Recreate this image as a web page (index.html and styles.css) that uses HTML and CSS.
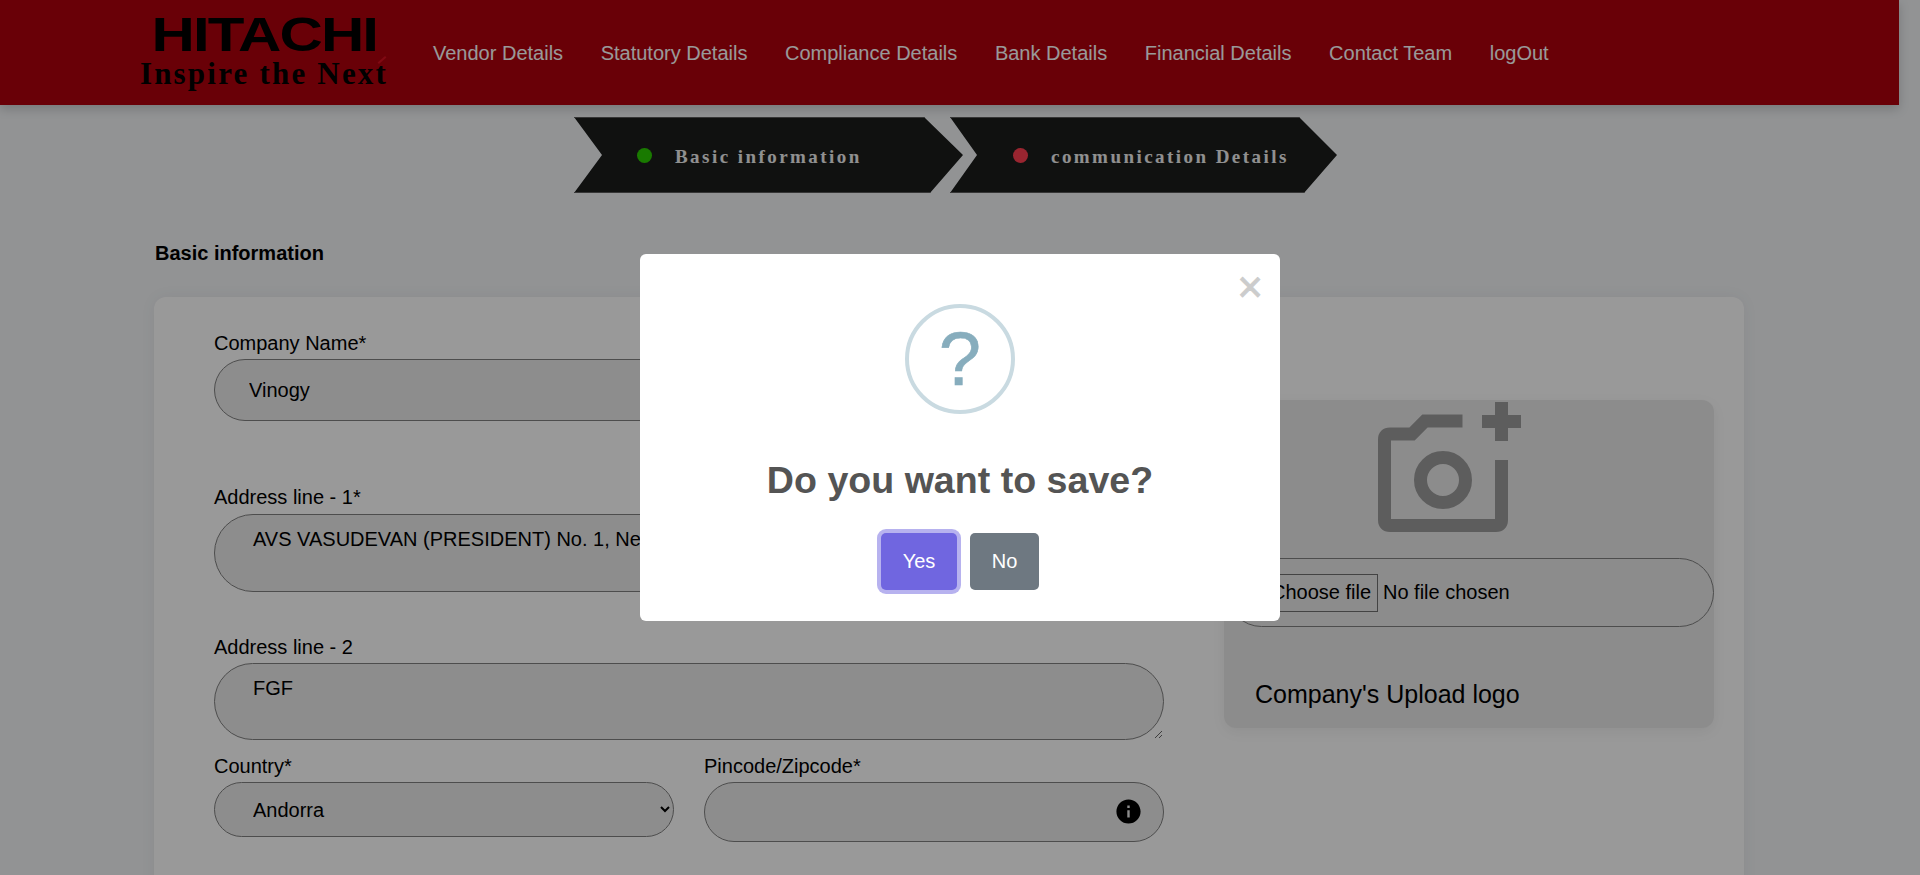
FILE: index.html
```html
<!DOCTYPE html>
<html lang="en">
<head>
<meta charset="utf-8">
<title>Vendor Details</title>
<link rel="stylesheet" href="styles.css">
</head>
<body>
<div class="page">
  <header class="topbar">
    <div class="logo">
      <span class="logo-name">HITACHI</span>
      <span class="logo-tag">Inspire the Next</span>
      <span class="logo-accent"></span>
    </div>
    <nav class="nav">
      <a href="#">Vendor Details</a>
      <a href="#">Statutory Details</a>
      <a href="#">Compliance Details</a>
      <a href="#">Bank Details</a>
      <a href="#">Financial Details</a>
      <a href="#">Contact Team</a>
      <a href="#">logOut</a>
    </nav>
  </header>

  <div class="steps">
    <div class="step step-one"><span class="dot dot-green"></span><span class="step-text">Basic information</span></div>
    <div class="step step-two"><span class="dot dot-red"></span><span class="step-text">communication Details</span></div>
  </div>

  <h2 class="section-title">Basic information</h2>

  <section class="card">
    <form class="fields">
      <div class="field field-company">
        <label class="label">Company Name*</label>
        <input class="control input-company" type="text" value="Vinogy">
      </div>
      <div class="field field-addr1">
        <label class="label label-addr1">Address line - 1*</label>
        <textarea class="control area area-one">AVS VASUDEVAN (PRESIDENT) No. 1, New Street</textarea>
      </div>
      <div class="field field-addr2">
        <label class="label">Address line - 2</label>
        <textarea class="control area area-two">FGF</textarea>
      </div>
      <div class="field-row">
        <div class="field">
          <label class="label">Country*</label>
          <select class="control select-country"><option>Andorra</option></select>
        </div>
        <div class="field">
          <label class="label">Pincode/Zipcode*</label>
          <div class="pin-wrap">
            <input class="control input-pin" type="text">
            <svg class="info-icon" viewBox="0 0 24 24"><path d="M12 2C6.48 2 2 6.48 2 12s4.48 10 10 10 10-4.48 10-10S17.52 2 12 2zm1 15h-2v-6h2v6zm0-8h-2V7h2v2z"/></svg>
          </div>
        </div>
      </div>
    </form>

    <aside class="upload">
      <svg class="camera" viewBox="0 0 143 130">
        <path class="camera-line" d="M84.5 19H47L34 32H12Q6.5 32 6.5 37.5V118Q6.5 123.5 12 123.5H118Q123.5 123.5 123.5 118V58"/>
        <circle class="camera-line" cx="65" cy="78" r="22.5"/>
        <path class="camera-line" d="M104 19.5H143M123.5 0V39"/>
      </svg>
      <div class="file-pill"><span class="file-btn">Choose file</span><span class="file-note">No file chosen</span></div>
      <p class="upload-label">Company's Upload logo</p>
    </aside>
  </section>
</div>

<div class="overlay">
  <div class="dialog" role="dialog">
    <button class="close" type="button">×</button>
    <div class="question"><span>?</span></div>
    <h2 class="dialog-title">Do you want to save?</h2>
    <div class="actions">
      <button class="btn btn-yes" type="button">Yes</button>
      <button class="btn btn-no" type="button">No</button>
    </div>
  </div>
</div>
</body>
</html>
```
FILE: styles.css
```css
* { box-sizing: border-box; }
html, body { margin: 0; height: 100%; overflow: hidden; }
body {
  background: #f3f5f7;
  color: #000;
  font-family: "Liberation Sans", Arial, sans-serif;
  font-size: 20px;
}
.page { width: 1899px; }

.topbar {
  display: flex;
  align-items: center;
  height: 105px;
  padding-left: 139px;
  background: #b0000d;
  box-shadow: 0 4px 10px rgba(0, 0, 0, .18);
}
.logo { position: relative; display: flex; flex-direction: column; align-items: center; width: 250px; margin-top: -1px; }
.logo-name {
  display: block;
  font-weight: 700;
  font-size: 48px;
  line-height: 44px;
  letter-spacing: -1.5px;
  transform: scaleX(1.25);
}
.logo-tag {
  display: block;
  font-family: "Liberation Serif", serif;
  font-weight: 700;
  font-size: 31px;
  line-height: 34px;
  letter-spacing: 2.2px;
  white-space: nowrap;
}
.logo-accent {
  position: absolute;
  top: 46px;
  left: 238px;
  width: 10px;
  height: 2px;
  background: #d81020;
  transform: rotate(-42deg);
}
.nav { display: flex; gap: 37.6px; margin-left: 44px; }
.nav a { color: #fff; text-decoration: none; line-height: 24px; }

.steps { display: flex; height: 76px; margin-top: 12px; padding-left: 574px; }
.step {
  display: flex;
  align-items: center;
  height: 76px;
  padding-top: 3px;
  background: #1c1d1c;
  border-top: 1px solid #5a5a5a;
  border-bottom: 1px solid #5a5a5a;
  color: #f0f0f0;
}
.step-one {
  width: 389px;
  padding-left: 63px;
  clip-path: polygon(0 0, 350px 0, 389px 50%, 356px 100%, 0 100%, 28px 50%);
}
.step-two {
  width: 387px;
  margin-left: -13px;
  padding-left: 63px;
  clip-path: polygon(0 0, 349px 0, 387px 50%, 354px 100%, 0 100%, 27px 50%);
}
.dot { width: 15px; height: 15px; border-radius: 50%; flex: none; margin-top: -3px; }
.dot-green { background: #2bcc00; }
.dot-red { background: #ff3e50; }
.step-text {
  margin-left: 23px;
  font-family: "Liberation Serif", serif;
  font-weight: 700;
  font-size: 19px;
  letter-spacing: 2.45px;
  white-space: nowrap;
}

.section-title {
  margin: 48px 0 32px 155px;
  font-size: 20px;
  font-weight: 700;
  line-height: 24px;
}

.card {
  display: flex;
  gap: 60px;
  width: 1590px;
  margin-left: 154px;
  padding: 34px 30px 60px 60px;
  background: #fff;
  border-radius: 12px;
  box-shadow: 0 0 16px rgba(0, 0, 0, .05);
}
.fields { width: 950px; flex: none; }
.label { display: block; line-height: 24px; margin-bottom: 4px; }
.label-addr1 { margin-bottom: 5px; }
.control {
  display: block;
  width: 100%;
  border: 1px solid #808080;
  background: #ececec;
  color: #000;
  font-family: "Liberation Sans", Arial, sans-serif;
  font-size: 20px;
  outline: none;
}
.field-addr1 { margin-top: 64px; }
.field-addr2 { margin-top: 43px; }
.field-row { display: grid; grid-template-columns: 459.5px 460px; gap: 30.5px; margin-top: 14px; }
.input-company { height: 62px; padding: 0 34px; border-radius: 31px; }
.area { padding: 12px 38px; border-radius: 40px; line-height: 24px; }
.area-one { height: 78px; resize: none; }
.area-two { height: 77px; }
.select-country { height: 55px; padding: 0 34px; border-radius: 28px; }
.pin-wrap { position: relative; }
.input-pin { height: 60px; padding: 0 60px 0 34px; border-radius: 30px; }
.info-icon { position: absolute; top: 15px; right: 21px; width: 29px; height: 29px; fill: #000; }

.upload {
  width: 490px;
  height: 328px;
  margin-top: 69px;
  padding: 2px 0 0 3px;
  background: #eaeaea;
  border-radius: 12px;
  box-shadow: 0 4px 14px rgba(0, 0, 0, .06);
  flex: none;
}
.camera { display: block; width: 143px; height: 130px; margin-left: 151px; }
.camera-line { fill: none; stroke: #9c9c9c; stroke-width: 13; }
.file-pill {
  display: flex;
  align-items: center;
  width: 487px;
  height: 69px;
  margin-top: 26px;
  padding-left: 33px;
  border: 1px solid #808080;
  border-radius: 35px;
}
.file-btn {
  display: flex;
  align-items: center;
  width: 117px;
  height: 38px;
  padding-left: 9px;
  border: 1px solid #707070;
  white-space: nowrap;
}
.file-note { margin-left: 5px; white-space: nowrap; }
.upload-label { margin: 53px 0 0 28px; font-size: 25px; line-height: 28px; }

.overlay {
  position: fixed;
  inset: 0;
  display: flex;
  align-items: center;
  justify-content: center;
  background: rgba(0, 0, 0, .4);
}
.dialog {
  position: relative;
  display: flex;
  flex-direction: column;
  align-items: center;
  width: 640px;
  height: 367px;
  padding-top: 50px;
  background: #fff;
  border-radius: 6px;
}
.close {
  position: absolute;
  top: 12px;
  right: 10px;
  width: 40px;
  height: 40px;
  padding: 0;
  border: 0;
  background: none;
  color: #ccc;
  font-family: "Liberation Sans", Arial, sans-serif;
  font-size: 44px;
  line-height: 42px;
  -webkit-text-stroke: .8px #ccc;
}
.question {
  display: flex;
  align-items: center;
  justify-content: center;
  width: 110px;
  height: 110px;
  border: 4px solid #c9dae1;
  border-radius: 50%;
  color: #87adbd;
  font-size: 76px;
  line-height: 1;
  -webkit-text-stroke: .6px #87adbd;
}
.dialog-title {
  margin: 44px 0 0;
  color: #545454;
  font-size: 37.6px;
  font-weight: 700;
  line-height: 44px;
}
.actions { display: flex; gap: 13px; margin-top: 31px; }
.btn {
  height: 57px;
  border: 0;
  border-radius: 5px;
  color: #fff;
  font-family: "Liberation Sans", Arial, sans-serif;
  font-size: 20px;
}
.btn-yes { width: 76px; background: #7066e0; box-shadow: 0 0 0 4px rgba(112, 102, 224, .5); }
.btn-no { width: 69px; background: #6e7881; }
```
